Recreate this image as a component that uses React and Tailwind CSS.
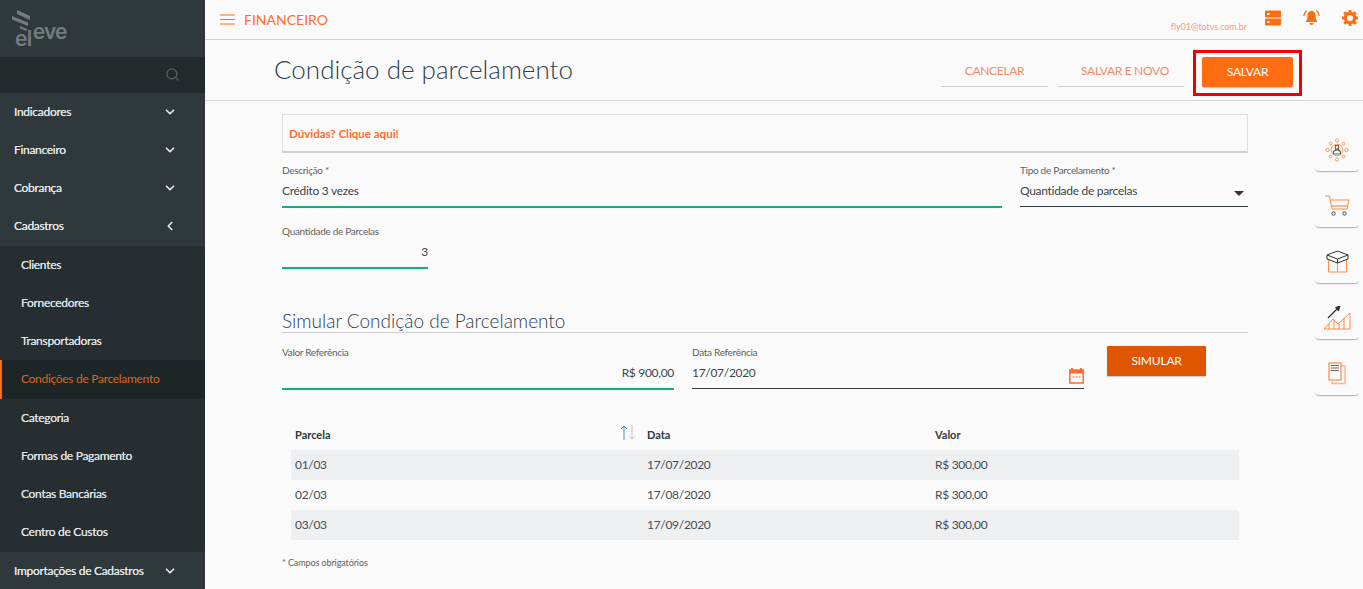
import React from "react";
import { ChevronDown, ChevronLeft, Search } from "lucide-react";

const fontFamily = "font-['Lato',sans-serif]";

const subItems = [
  "Clientes",
  "Fornecedores",
  "Transportadoras",
  "Condições de Parcelamento",
  "Categoria",
  "Formas de Pagamento",
  "Contas Bancárias",
  "Centro de Custos",
];

const rows = [
  ["01/03", "17/07/2020", "R$ 300,00"],
  ["02/03", "17/08/2020", "R$ 300,00"],
  ["03/03", "17/09/2020", "R$ 300,00"],
];

const TopItem = ({ label, open }) => (
  <div className="flex h-[38.25px] shrink-0 items-center justify-between pl-[14px] pr-[28px] text-[12px] tracking-[-0.3px] text-[#e4e7e8] [text-shadow:0_0_0.4px_#e4e7e8]">
    <span>{label}</span>
    {open ? <ChevronLeft size={14} strokeWidth={3} /> : <ChevronDown size={14} strokeWidth={3} />}
  </div>
);

const Sidebar = () => (
  <aside className="flex h-[589px] w-[205px] shrink-0 flex-col overflow-hidden bg-[#2f393c]">
    <div className="h-[57px] shrink-0 pl-[12px] pt-[10px]">
      <svg width="19" height="21" viewBox="0 0 19 21" className="block" fill="#747b7c">
        <path d="M5 0 L18 6 V10 L5 4 Z" />
        <path d="M0 6 L16 12.5 V16 L0 9.5 Z" />
        <path d="M8 16 L15 19 V21 L8 18.5 Z" />
      </svg>
      <div className="-mt-[10px] ml-[3px] flex items-start font-['Inter',sans-serif] text-[21px] font-semibold leading-none text-[#747b7c]">
        <span className="mt-[7px] tracking-[-0.6px]">el</span>
        <span className="ml-[1px] tracking-[-0.8px]">eve</span>
      </div>
    </div>
    <div className="flex h-[35.5px] shrink-0 items-center justify-end bg-[#222a2c] pr-[25px]">
      <Search size={15} strokeWidth={2} className="text-[#56625f]" />
    </div>
    <TopItem label="Indicadores" />
    <TopItem label="Financeiro" />
    <TopItem label="Cobrança" />
    <TopItem label="Cadastros" open />
    <div className="shrink-0 bg-[#262e31]">
      {subItems.map((item) => {
        const active = item === "Condições de Parcelamento";
        return (
          <div
            key={item}
            className={
              active
                ? "flex h-[38.25px] items-center border-l-2 border-[#ff6c12] bg-[#1e2527] pl-[19px] text-[12px] tracking-[-0.3px] text-[#d8691f]"
                : "flex h-[38.25px] items-center pl-[21px] text-[12px] tracking-[-0.3px] text-[#dfe2e3] [text-shadow:0_0_0.4px_#dfe2e3]"
            }
          >
            {item}
          </div>
        );
      })}
    </div>
    <TopItem label="Importações de Cadastros" />
  </aside>
);

const Header = () => (
  <header className="flex h-[40px] shrink-0 items-center border-b border-[#cfcfcf] bg-[#fafafa] pl-[15px] pr-[5px]">
    <svg width="15" height="11" viewBox="0 0 15 11" fill="none" stroke="#ff6c12" strokeWidth="1.2">
      <path d="M0 1 H15 M0 5.5 H15 M0 10 H15" />
    </svg>
    <span className="ml-[9px] text-[14px] text-[#ff6c2c]">FINANCEIRO</span>
    <span className="ml-auto mt-[15px] text-[9px] tracking-[-0.05px] text-[#f49a86]">fly01@totvs.com.br</span>
    <svg width="16" height="16" viewBox="0 0 16 16" className="mb-[4px] ml-[18px]" fill="#ff6c12">
      <path d="M0 1.5 A1 1 0 0 1 1 .5 H15 A1 1 0 0 1 16 1.5 V6.5 A1 1 0 0 1 15 7.5 H1 A1 1 0 0 1 0 6.5 Z M0 9.5 A1 1 0 0 1 1 8.5 H15 A1 1 0 0 1 16 9.5 V14.5 A1 1 0 0 1 15 15.5 H1 A1 1 0 0 1 0 14.5 Z" />
      <rect x="2" y="3" width="2.5" height="2" fill="#fff" />
      <rect x="2" y="11" width="2.5" height="2" fill="#fff" />
    </svg>
    <svg width="17" height="17" viewBox="0 0 17 17" className="mb-[4px] ml-[22px]" fill="#ff6c12">
      <path d="M8.5 2 C5.5 2 4.5 4.5 4.5 7 C4.5 10 3.5 11.5 2.5 13 H14.5 C13.5 11.5 12.5 10 12.5 7 C12.5 4.5 11.5 2 8.5 2 Z" />
      <path d="M6.5 14 H10.5 A2 2 0 0 1 6.5 14 Z" />
      <path d="M3.5 1.5 C2 3 1 4.5 .8 7 M13.5 1.5 C15 3 16 4.5 16.2 7" fill="none" stroke="#ff6c12" strokeWidth="1.2" />
    </svg>
    <svg width="16" height="16" viewBox="0 0 16 16" className="mb-[4px] ml-[22px]">
      <circle cx="8" cy="8" r="4.6" fill="none" stroke="#ff6c12" strokeWidth="3.2" />
      <path d="M8 0 V3 M8 13 V16 M0 8 H3 M13 8 H16 M2.3 2.3 L4.4 4.4 M11.6 11.6 L13.7 13.7 M2.3 13.7 L4.4 11.6 M11.6 4.4 L13.7 2.3" stroke="#ff6c12" strokeWidth="3" />
    </svg>
  </header>
);

const TitleBar = () => (
  <div className="flex h-[61px] shrink-0 items-center border-b border-[#d6d6d6] bg-[#fafafa] pl-[69px] pr-[61px]">
    <h1 className="mb-[2px] text-[26px] font-light text-[#2d3e50]">Condição de parcelamento</h1>
    <button className="ml-auto mt-[-2px] h-[36px] w-[107px] border-b border-[#cfcfcf] pt-[4px] text-[12px] tracking-[-0.3px] text-[#f58a62]">
      CANCELAR
    </button>
    <button className="ml-[10px] mt-[-2px] h-[36px] w-[126px] border-b border-[#cfcfcf] pl-[8px] pt-[4px] text-[12px] tracking-[-0.3px] text-[#f58a62]">
      SALVAR E NOVO
    </button>
    <div className="ml-[9px] mt-[6px] border-[3px] border-[#f00000] px-[6px] pb-[6px] pt-[4px]">
      <button className="block h-[30px] w-[91px] rounded-[2px] bg-[#ff6c12] text-[12px] tracking-[-0.2px] text-[#fff] shadow-[0_1px_1px_rgba(0,0,0,0.2)]">
        SALVAR
      </button>
    </div>
  </div>
);

const Field = ({ label, value, line, align, className, children }) => (
  <div className={className}>
    <div className="h-[12px] text-[10px] leading-[12px] tracking-[-0.3px] text-[#5a6266]">{label}</div>
    <div
      className={
        "flex h-[27px] items-end pb-[3px] text-[12px] tracking-[-0.3px] text-[#3c464b] " +
        (align === "right" ? "justify-end" : "justify-between")
      }
    >
      {value}
      {children}
    </div>
    <div className={line}></div>
  </div>
);

const green = "mt-[3px] h-[2px] bg-[#10b085]";
const dark = "mt-[3px] h-px bg-[#2f393c]";

const SideCard = ({ children }) => (
  <div className="flex h-[44px] w-[44px] items-center justify-center rounded-[4px] border-b border-[#bdbdbd] bg-[#fafafa] shadow-[0_1px_1px_rgba(0,0,0,0.05)]">
    {children}
  </div>
);

const Rail = () => (
  <div className="flex w-[44px] shrink-0 flex-col gap-[12px] pt-[27px]">
    <SideCard>
      <svg width="24" height="24" viewBox="0 0 24 24" fill="none" stroke="#ff9a5c" strokeWidth="1">
        <circle cx="12" cy="12" r="5.8" />
        <circle cx="12" cy="2.5" r="1.6" />
        <circle cx="12" cy="21.5" r="1.6" />
        <circle cx="2.5" cy="12" r="1.6" />
        <circle cx="21.5" cy="12" r="1.6" />
        <circle cx="5.5" cy="5.5" r="1.4" />
        <circle cx="18.5" cy="5.5" r="1.4" />
        <circle cx="5.5" cy="18.5" r="1.4" />
        <circle cx="18.5" cy="18.5" r="1.4" />
        <path d="M10.5 7.5 H13.5 V11 H10.5 Z M8.5 16 V13.5 Q12 10 15.5 13.5 V16 Z" stroke="#666" strokeWidth="1.2" />
      </svg>
    </SideCard>
    <SideCard>
      <svg width="25" height="21" viewBox="0 0 25 21" fill="none" stroke="#ff8a45" strokeWidth="1">
        <path d="M0 1 H4.5 L7 14 H22 L24 5 H5.5" />
        <path d="M6.2 11 H23" strokeWidth="1.2" />
        <circle cx="8.5" cy="18.5" r="1.7" stroke="#444" />
        <circle cx="19.5" cy="18.5" r="1.7" stroke="#444" />
      </svg>
    </SideCard>
    <SideCard>
      <svg width="23" height="23" viewBox="0 0 23 23" fill="none" strokeWidth="1">
        <path d="M2.5 9 V22 H20.5 V9 M11.5 13 V22" stroke="#ff8a45" />
        <path d="M1 5 L11.5 1 L22 5 L11.5 9 Z M1 5 V9 L11.5 13 L22 9 V5 M11.5 9 V13" stroke="#333" />
      </svg>
    </SideCard>
    <SideCard>
      <svg width="28" height="24" viewBox="0 0 28 24" fill="none" strokeWidth="1">
        <path d="M1 23 L10 13 L15 18 L27 7 V23 Z M6 18 V23 M11 14 V23 M16 17 V23 M21 12 V23" stroke="#ff8a45" />
        <path d="M5 12 L16 1" stroke="#333" strokeWidth="1.3" />
        <path d="M12.5 1.5 L17 0 L15.5 5 Z" fill="#333" stroke="#333" />
      </svg>
    </SideCard>
    <SideCard>
      <svg width="18" height="23" viewBox="0 0 18 23" fill="none" strokeWidth="1">
        <path d="M4 19.5 V21.5 H17 V4 H13" stroke="#ffb48a" strokeWidth="1.5" />
        <rect x="1" y="1" width="12" height="17" fill="#fafafa" stroke="#ff8a45" strokeWidth="1.2" />
        <path d="M3 3.5 H11 M3 6 H11 M3 8.5 H11" stroke="#666" />
      </svg>
    </SideCard>
  </div>
);

const Content = () => (
  <div className="flex w-[966px] shrink-0 flex-col pt-[13px]">
    <div className="flex h-[39px] shrink-0 items-center border border-b-2 border-[#e0e0e0] border-b-[#cfcfcf] pl-[6px] pt-[1px] text-[11.5px] font-bold text-[#ff6c2c]">
      Dúvidas? Clique aqui!
    </div>
    <div className="mt-[11px] flex gap-[18px]">
      <Field label="Descrição *" value="Crédito 3 vezes" line={green} className="w-[720px]" />
      <Field label="Tipo de Parcelamento *" value="Quantidade de parcelas" line={dark} className="w-[228px]">
        <span className="mb-[4px] mr-[4px] border-x-[5px] border-t-[5px] border-x-transparent border-t-[#333]"></span>
      </Field>
    </div>
    <Field label="Quantidade de Parcelas" value="3" align="right" line={green} className="mt-[17px] w-[146px]" />
    <div className="mt-[41px] h-[23px] border-b border-[#cfcfcf] text-[19px] font-light leading-[22px] text-[#2d3e50]">
      Simular Condição de Parcelamento
    </div>
    <div className="mt-[13px] flex">
      <Field label="Valor Referência" value="R$ 900,00" align="right" line={green} className="h-[44px] w-[392px]" />
      <Field label="Data Referência" value="17/07/2020" line={dark} className="ml-[18px] h-[44px] w-[392px]">
        <svg width="15" height="16" viewBox="0 0 15 16" className="mb-[-2px]">
          <path d="M3 0 V3 M12 0 V3" stroke="#ff6c2c" strokeWidth="2" />
          <rect x="0.75" y="2" width="13.5" height="13" fill="none" stroke="#ff6c2c" strokeWidth="1.5" />
          <rect x="0.75" y="2" width="13.5" height="3.5" fill="#ff6c2c" />
          <path d="M3.5 9 H11.5" stroke="#ff6c2c" strokeWidth="1" strokeDasharray="2 1" />
        </svg>
      </Field>
      <button className="ml-[23px] h-[30px] w-[99px] rounded-[1px] bg-[#e05500] text-[12px] tracking-[-0.2px] text-[#fff] shadow-[0_1px_1px_rgba(0,0,0,0.2)]">
        SIMULAR
      </button>
    </div>
    <div className="ml-[9px] mt-[33px] w-[948px]">
      <div className="flex h-[27px] items-center pb-[2px] text-[11px] font-bold text-[#2f393c]">
        <span className="w-[329px] pl-[4px]">Parcela</span>
        <span className="relative w-[27px]">
          <svg width="16" height="15" viewBox="0 0 16 15" className="absolute -top-[11px] left-0" fill="none" strokeWidth="1">
            <path d="M4 15 V1 M1 4 L4 1 L7 4" stroke="#4a90c2" />
            <path d="M12 0 V14 M9 11 L12 14 L15 11" stroke="#b9c7d1" />
          </svg>
        </span>
        <span className="w-[288px]">Data</span>
        <span>Valor</span>
      </div>
      {rows.map((row, i) => (
        <div
          key={row[0]}
          className={"flex h-[30px] items-center text-[12px] tracking-[-0.3px] text-[#444d52] " + (i % 2 === 0 ? "bg-[#eeeff1]" : "")}
        >
          <span className="w-[356px] pl-[4px]">{row[0]}</span>
          <span className="w-[288px]">{row[1]}</span>
          <span>{row[2]}</span>
        </div>
      ))}
    </div>
    <div className="mt-[16px] text-[9px] tracking-[-0.1px] text-[#5a6266]">* Campos obrigatórios</div>
  </div>
);

export default function App() {
  return (
    <div className={"flex h-[589px] w-[1363px] overflow-hidden bg-[#fafafa] " + fontFamily}>
      <Sidebar />
      <main className="flex min-w-0 flex-1 flex-col">
        <Header />
        <TitleBar />
        <div className="flex">
          <div className="ml-[77px]">
            <Content />
          </div>
          <div className="ml-[67px]">
            <Rail />
          </div>
        </div>
      </main>
    </div>
  );
}
